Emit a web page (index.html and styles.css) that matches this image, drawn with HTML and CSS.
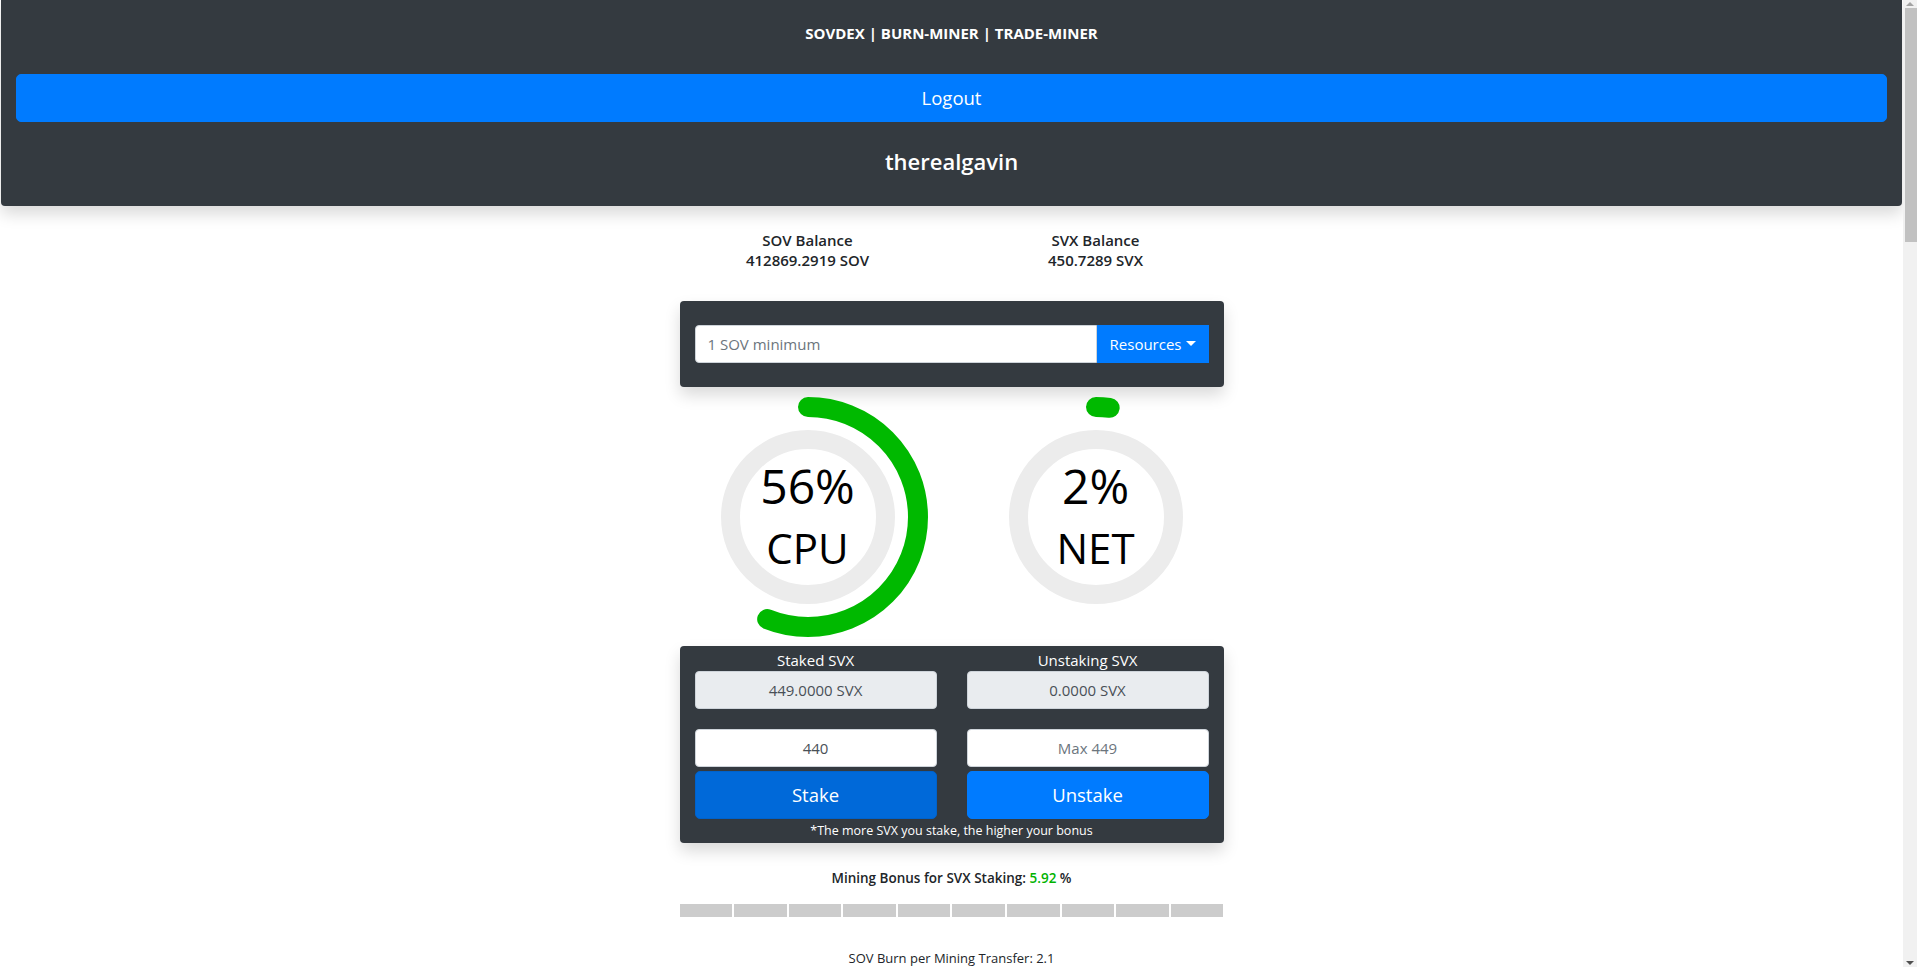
FILE: index.html
```html
<!DOCTYPE html>
<html>
<head>
  <meta charset="utf-8" />
  <title>SOVDEX | BURN-MINER | TRADE-MINER</title>
  <link rel="stylesheet" href="styles.css">
</head>
<body>
  <div class="topbar">
    <h6 class="brand">SOVDEX | BURN-MINER | TRADE-MINER</h6>
    <button class="btn btn-primary btn-lg btn-block">Logout</button>
    <h4 class="account">therealgavin</h4>
  </div>

  <div class="main">
    <div class="balances">
      <div class="balance">SOV Balance<br>412869.2919 SOV</div>
      <div class="balance">SVX Balance<br>450.7289 SVX</div>
    </div>

    <div class="panel buy-panel">
      <div class="input-group">
        <input type="text" class="form-control" placeholder="1 SOV minimum" />
        <button class="btn btn-primary dropdown-toggle">Resources</button>
      </div>
    </div>

    <div class="gauges">
      <div class="gauge">
        <svg width="240" height="240" viewBox="0 0 240 240">
          <circle class="gauge-track" cx="120" cy="120" r="77.5" />
          <!-- 56% of 2*pi*110 -->
          <circle class="gauge-fill" cx="120" cy="120" r="110" stroke-dasharray="387.04 691.15" transform="rotate(-90 120 120)" />
        </svg>
        <div class="gauge-label">
          <span class="gauge-pct">56%</span>
          <span class="gauge-name">CPU</span>
        </div>
      </div>
      <div class="gauge">
        <svg width="240" height="240" viewBox="0 0 240 240">
          <circle class="gauge-track" cx="120" cy="120" r="77.5" />
          <!-- 2% of 2*pi*110 -->
          <circle class="gauge-fill" cx="120" cy="120" r="110" stroke-dasharray="13.82 691.15" transform="rotate(-90 120 120)" />
        </svg>
        <div class="gauge-label">
          <span class="gauge-pct">2%</span>
          <span class="gauge-name">NET</span>
        </div>
      </div>
    </div>

    <div class="panel stake-panel">
      <div class="stake-grid">
        <div class="stake-col">
          <div class="field-label">Staked SVX</div>
          <div class="form-control readonly">449.0000 SVX</div>
          <input type="text" class="form-control amount" value="440" />
          <button class="btn btn-primary btn-lg btn-block active">Stake</button>
        </div>
        <div class="stake-col">
          <div class="field-label">Unstaking SVX</div>
          <div class="form-control readonly">0.0000 SVX</div>
          <input type="text" class="form-control amount" placeholder="Max 449" />
          <button class="btn btn-primary btn-lg btn-block">Unstake</button>
        </div>
      </div>
      <p class="stake-note">*The more SVX you stake, the higher your bonus</p>
    </div>

    <p class="bonus">Mining Bonus for SVX Staking: <span class="bonus-value">5.92</span> %</p>
    <div class="bonus-bar">
      <span></span><span></span><span></span><span></span><span></span>
      <span></span><span></span><span></span><span></span><span></span>
    </div>

    <p class="burn">SOV Burn per Mining Transfer: 2.1</p>
  </div>

  <div class="scrollbar"><div class="scrollbar-thumb"></div></div>
</body>
</html>
```

FILE: styles.css
```css
html, body {
  margin: 0;
}

body {
  font-family: "Open Sans", "Noto Sans", sans-serif;
  color: #212529;
  background-color: #fff;
  padding-right: 14px;
}

/* window scrollbar strip */
.scrollbar {
  position: fixed;
  top: 0;
  right: 0;
  bottom: 0;
  width: 14px;
  background-color: #f1f1f1;
}

.scrollbar::before,
.scrollbar::after {
  content: "";
  position: absolute;
  left: 3px;
  border-left: 4px solid transparent;
  border-right: 4px solid transparent;
}

.scrollbar::before {
  top: 2px;
  border-bottom: 4px solid #a3a3a3;
}

.scrollbar::after {
  bottom: 2px;
  border-top: 4px solid #505050;
}

.scrollbar-thumb {
  margin: 8px 0 0 2px;
  height: 234px;
  background-color: #c1c1c1;
}

/* header card */
.topbar {
  margin: 0 1px;
  padding: 21px 15px 30px;
  background-color: #343a40;
  border-radius: 0 0 4px 4px;
  box-shadow: 0 8px 16px rgba(0, 0, 0, .15);
  text-align: center;
  color: #fff;
}

.brand {
  margin: 0 0 29px;
  font-size: 15px;
  font-weight: 700;
  line-height: 24px;
}

.account {
  margin: 25px 0 0;
  font-size: 22px;
  font-weight: 600;
  line-height: 29px;
}

/* buttons */
.btn {
  font-family: inherit;
  font-size: 15px;
  line-height: 24px;
  padding: 6px 12px;
  border: 1px solid transparent;
  border-radius: 4px;
  cursor: pointer;
}

.btn-primary {
  background-color: #007bff;
  border-color: #007bff;
  color: #fff;
}

.btn-primary.active,
.btn-primary:hover {
  background-color: #0069d9;
  border-color: #0062cc;
}

.btn-lg {
  font-size: 18.5px;
  line-height: 30px;
  padding: 8px 16px;
  border-radius: 5px;
}

.btn-block {
  display: block;
  width: 100%;
}

.dropdown-toggle::after {
  content: "";
  display: inline-block;
  margin-left: 4px;
  vertical-align: 4px;
  border-top: 5px solid;
  border-right: 5px solid transparent;
  border-left: 5px solid transparent;
}

/* inputs */
.form-control {
  box-sizing: border-box;
  display: block;
  width: 100%;
  height: 38px;
  padding: 6px 12px;
  font-family: inherit;
  font-size: 15px;
  line-height: 24px;
  color: #495057;
  background-color: #fff;
  border: 1px solid #ced4da;
  border-radius: 4px;
}

.form-control::placeholder {
  color: #6c757d;
}

/* page body */
.main {
  width: 576px;
  margin: 0 auto;
  min-height: 3720px;
}

.balances {
  display: flex;
  margin-top: 25px;
}

.balance {
  flex: 1;
  text-align: center;
  font-size: 15px;
  font-weight: 600;
  line-height: 19.5px;
}

.panel {
  margin: 0 16px;
  background-color: #343a40;
  border-radius: 4px;
  box-shadow: 0 8px 16px rgba(0, 0, 0, .15);
}

.buy-panel {
  margin-top: 31px;
  padding: 24px 15px;
}

.input-group {
  display: flex;
}

.input-group .form-control {
  flex: 1;
  border-radius: 4px 0 0 4px;
}

.input-group .btn {
  border-radius: 0;
  white-space: nowrap;
}

/* CPU / NET rings */
.gauges {
  display: flex;
  margin-top: 10px;
}

.gauge {
  position: relative;
  width: 240px;
  height: 240px;
  margin: 0 auto;
}

.gauge svg {
  display: block;
}

.gauge-track {
  fill: none;
  stroke: #ececec;
  stroke-width: 19;
}

.gauge-fill {
  fill: none;
  stroke: #00b900;
  stroke-width: 20;
  stroke-linecap: round;
}

.gauge-label {
  position: absolute;
  top: 58px;
  left: 0;
  right: 0;
  text-align: center;
  color: #000;
}

.gauge-pct {
  display: block;
  font-size: 48px;
  line-height: 62px;
}

.gauge-name {
  display: block;
  font-size: 42px;
  line-height: 61px;
}

/* staking card */
.stake-panel {
  margin-top: 9px;
  padding: 3px 15px 0;
  color: #fff;
}

.stake-grid {
  display: grid;
  grid-template-columns: 1fr 1fr;
  column-gap: 30px;
}

.field-label {
  text-align: center;
  font-size: 15px;
  line-height: 22px;
}

.readonly {
  background-color: #e9ecef;
  text-align: center;
  margin-bottom: 20px;
}

.amount {
  text-align: center;
  margin-bottom: 4px;
}

.stake-note {
  margin: 0;
  text-align: center;
  font-size: 12.5px;
  line-height: 24px;
}

.bonus {
  margin: 25px 0 0;
  text-align: center;
  font-size: 13.5px;
  font-weight: 600;
  line-height: 21px;
}

.bonus-value {
  color: #00b300;
}

.bonus-bar {
  display: flex;
  gap: 2px;
  height: 13px;
  margin: 15px 16px 0;
}

.bonus-bar span {
  flex: 1;
  background-color: #ccc;
}

.burn {
  margin: 31px 0 0;
  text-align: center;
  font-size: 13px;
  line-height: 21px;
}
```
